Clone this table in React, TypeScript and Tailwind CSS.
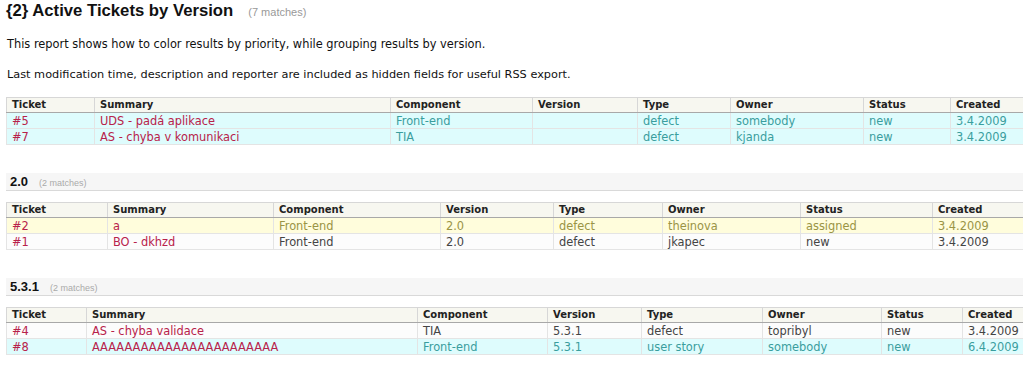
import React from 'react';

type Tone = 'teal' | 'yellow' | 'plain';

interface Ticket {
  id: string;
  summary: string;
  component: string;
  version: string;
  type: string;
  owner: string;
  status: string;
  created: string;
  tone: Tone;
}

interface Group {
  title?: string;
  cols: string[];
  tickets: Ticket[];
}

const groups: Group[] = [
  {
    cols: ['w-[88px]', 'w-[296px]', 'w-[142px]', 'w-[105px]', 'w-[93px]', 'w-[133px]', 'w-[87px]', 'w-auto'],
    tickets: [
      { id: '#5', summary: 'UDS - padá aplikace', component: 'Front-end', version: '', type: 'defect', owner: 'somebody', status: 'new', created: '3.4.2009', tone: 'teal' },
      { id: '#7', summary: 'AS - chyba v komunikaci', component: 'TIA', version: '', type: 'defect', owner: 'kjanda', status: 'new', created: '3.4.2009', tone: 'teal' },
    ],
  },
  {
    title: '2.0',
    cols: ['w-[101px]', 'w-[166px]', 'w-[167px]', 'w-[113px]', 'w-[109px]', 'w-[138px]', 'w-[132px]', 'w-auto'],
    tickets: [
      { id: '#2', summary: 'a', component: 'Front-end', version: '2.0', type: 'defect', owner: 'theinova', status: 'assigned', created: '3.4.2009', tone: 'yellow' },
      { id: '#1', summary: 'BO - dkhzd', component: 'Front-end', version: '2.0', type: 'defect', owner: 'jkapec', status: 'new', created: '3.4.2009', tone: 'plain' },
    ],
  },
  {
    title: '5.3.1',
    cols: ['w-[80px]', 'w-[331px]', 'w-[130px]', 'w-[94px]', 'w-[121px]', 'w-[119px]', 'w-[81px]', 'w-auto'],
    tickets: [
      { id: '#4', summary: 'AS - chyba validace', component: 'TIA', version: '5.3.1', type: 'defect', owner: 'topribyl', status: 'new', created: '3.4.2009', tone: 'plain' },
      { id: '#8', summary: 'AAAAAAAAAAAAAAAAAAAAAAA', component: 'Front-end', version: '5.3.1', type: 'user story', owner: 'somebody', status: 'new', created: '6.4.2009', tone: 'teal' },
    ],
  },
];

const headers = ['Ticket', 'Summary', 'Component', 'Version', 'Type', 'Owner', 'Status', 'Created'];

const toneRow: Record<Tone, string> = {
  teal: 'bg-[#defcfd] text-[#3a9e9e]',
  yellow: 'bg-[#fffddc] text-[#9a9445]',
  plain: 'bg-[#fcfcfc] text-[#444]',
};

const cell = 'h-[16px] px-[5px] py-0 border border-[#e4e4e4] whitespace-nowrap overflow-hidden';

function TicketTable({ group }: { group: Group }) {
  return (
    <table className="table-fixed w-[1024px] border-collapse border border-[#d7d7d7] text-[11.4px] leading-[14px]">
      <colgroup>
        {group.cols.map((c, i) => (
          <col key={i} className={c} />
        ))}
      </colgroup>
      <thead>
        <tr>
          {headers.map((h) => (
            <th
              key={h}
              className="h-[15px] px-[5px] py-0 text-left font-bold text-[10px] text-[#222] bg-[#f7f7f0] border border-[#d7d7d7] border-b-[#a8a8a8]"
            >
              {h}
            </th>
          ))}
        </tr>
      </thead>
      <tbody>
        {group.tickets.map((t) => (
          <tr key={t.id} className={toneRow[t.tone]}>
            <td className={cell}>
              <a className="text-[#b8224a]">{t.id}</a>
            </td>
            <td className={cell}>
              <a className="text-[#b8224a]">{t.summary}</a>
            </td>
            <td className={cell}>{t.component}</td>
            <td className={cell}>{t.version}</td>
            <td className={cell}>{t.type}</td>
            <td className={cell}>{t.owner}</td>
            <td className={cell}>{t.status}</td>
            <td className={cell}>{t.created}</td>
          </tr>
        ))}
      </tbody>
    </table>
  );
}

export default function App() {
  return (
    <div className="w-full h-[375px] overflow-hidden bg-white font-['DejaVu_Sans',Verdana,sans-serif] text-[#111]">
      <div className="pl-[6px]">
        <div className="flex items-baseline mt-[1px] leading-[20px] font-['Liberation_Sans',Arial,sans-serif]">
          <h1 className="text-[16.7px] font-bold text-[#111]">{'{2} Active Tickets by Version'}</h1>
          <span className="ml-[15px] text-[11px] text-[#999]">(7 matches)</span>
        </div>

        <p className="mt-[14px] pl-[1px] text-[11.4px] leading-[16px]">
          This report shows how to color results by priority, while grouping results by version.
        </p>
        <p className="mt-[15px] pl-[1px] text-[11.3px] leading-[16px]">
          Last modification time, description and reporter are included as hidden fields for useful RSS export.
        </p>

        <div className="mt-[14px]">
          <TicketTable group={groups[0]} />
        </div>

        {groups.slice(1).map((g) => (
          <div key={g.title} className="mt-[28px]">
            <div className="flex items-baseline h-[18px] pl-[4px] pt-[1px] bg-[#f6f6f6] border-b border-[#d9d9d9] font-['Liberation_Sans',Arial,sans-serif]">
              <h2 className="text-[13px] font-bold leading-[16px] text-[#111]">{g.title}</h2>
              <span className="ml-[11px] text-[9px] text-[#aaa]">(2 matches)</span>
            </div>
            <div className="mt-[11px]">
              <TicketTable group={g} />
            </div>
          </div>
        ))}
      </div>
    </div>
  );
}
